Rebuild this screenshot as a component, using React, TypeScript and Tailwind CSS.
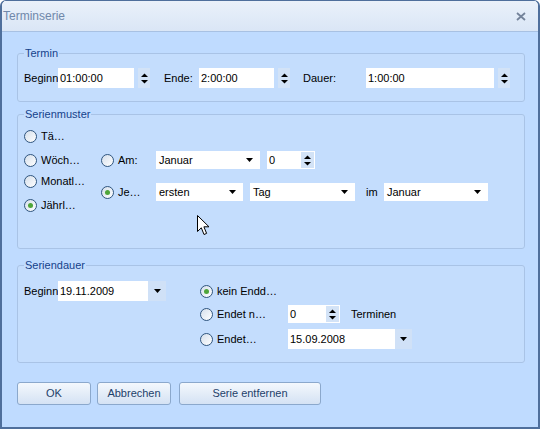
import type { ReactNode } from "react";

const FONT = "font-['Liberation_Sans',Arial,sans-serif]";

function Radio({ checked, label, w }: { checked?: boolean; label: string; w?: number }) {
  return (
    <div className="flex h-[13px] items-center" style={w ? { width: w } : undefined}>
      <div className="flex h-[13px] w-[13px] shrink-0 items-center justify-center rounded-full border border-[#30557e] bg-gradient-to-br from-[#d5dfeb] to-white">
        {checked && <div className="h-[5px] w-[5px] rounded-full bg-[#4fa53a]" />}
      </div>
      <span className="ml-[4px] whitespace-nowrap leading-[13px]">{label}</span>
    </div>
  );
}

function Arrow() {
  return (
    <svg width="7" height="4" viewBox="0 0 7 4">
      <path d="M0 0H7L3.5 4Z" fill="#000" />
    </svg>
  );
}

function SpinArrows() {
  return (
    <svg width="7" height="11" viewBox="0 0 7 11">
      <path d="M0 4H7L3.5 0.5Z" fill="#000" />
      <path d="M0 7H7L3.5 10.5Z" fill="#000" />
    </svg>
  );
}

// Spin box whose buttons sit outside the white field (Termin row)
function TimeSpin({ value, w, gap }: { value: string; w: number; gap: number }) {
  return (
    <div className="flex h-[20px] items-stretch">
      <div className="flex items-center bg-white pl-[2px]" style={{ width: w }}>
        {value}
      </div>
      <div
        className="flex w-[12px] items-center justify-center bg-[#d3e3f7]"
        style={{ marginLeft: gap }}
      >
        <SpinArrows />
      </div>
    </div>
  );
}

// Spin box with buttons inside the white field
function NumSpin({ value, w }: { value: string; w: number }) {
  return (
    <div className="flex h-[18px] items-stretch bg-white py-[1px] pr-[1px]" style={{ width: w }}>
      <div className="flex flex-1 items-center pl-[2px]">{value}</div>
      <div className="flex w-[13px] items-center justify-center bg-[#d3e3f7]">
        <SpinArrows />
      </div>
    </div>
  );
}

function Combo({ value, w }: { value: string; w: number }) {
  return (
    <div className="flex h-[18px] items-center justify-between bg-white pl-[3px] pr-[7px]" style={{ width: w }}>
      <span>{value}</span>
      <Arrow />
    </div>
  );
}

function DateBox({ value, w, btn }: { value: string; w: number; btn: number }) {
  return (
    <div className="flex h-[20px] items-stretch">
      <div className="flex items-center bg-white pl-[2px]" style={{ width: w }}>
        {value}
      </div>
      <div className="flex items-center justify-center bg-[#d0e1f7]" style={{ width: btn }}>
        <Arrow />
      </div>
    </div>
  );
}

function Group({ title, h, className, children }: { title: string; h: number; className?: string; children: ReactNode }) {
  return (
    <fieldset
      className={`w-[508px] rounded-[3px] border border-[#a9c3e6] bg-[#c4ddfd] ${className ?? ""}`}
      style={{ height: h }}
    >
      <legend className="ml-[6px] px-[1px] leading-[13px] text-[#15428b]">{title}</legend>
      {children}
    </fieldset>
  );
}

function Button({ label, w, className }: { label: string; w: number; className?: string }) {
  return (
    <button
      className={`h-[23px] rounded-[3px] border border-[#8ba8cc] bg-gradient-to-b from-[#f4f8fd] via-[#e4edf8] to-[#d4e2f4] text-[#1e3f6a] ${className ?? ""}`}
      style={{ width: w }}
    >
      {label}
    </button>
  );
}

export default function App() {
  return (
    <div
      className={`relative flex h-[429px] w-[540px] flex-col overflow-hidden rounded-t-[6px] border-2 border-t-1 border-[#4f6f9c] text-[11px] text-black ${FONT}`}
    >
      {/* title bar */}
      <div className="flex h-[31px] shrink-0 items-center justify-between border-b border-[#a8c1e3] bg-gradient-to-b from-[#eaf1fa] to-[#dae6f6] pl-[1px] pr-[12px]">
        <span className="text-[12px] text-[#7088aa]">Terminserie</span>
        <svg width="10" height="9" viewBox="0 0 10 9">
          <path d="M1 1L9 8M9 1L1 8" stroke="#74839a" strokeWidth="1.8" />
        </svg>
      </div>

      {/* body */}
      <div className="flex flex-1 flex-col bg-[#bfdbff] pl-[15px] pt-[15px]">
        <Group title="Termin" h={55}>
          <div className="flex items-center pl-[6px] pt-[8px]">
            <span className="w-[34px]">Beginn</span>
            <TimeSpin value="01:00:00" w={76} gap={4} />
            <span className="ml-[14px] w-[35px]">Ende:</span>
            <TimeSpin value="2:00:00" w={75} gap={4} />
            <span className="ml-[13px] w-[63px]">Dauer:</span>
            <TimeSpin value="1:00:00" w={128} gap={4} />
          </div>
        </Group>

        <Group title="Serienmuster" h={141} className="mt-[6px]">
          <div className="flex items-start pl-[6px] pt-[9px]">
            <div className="flex w-[77px] flex-col">
              <Radio label="Tä…" />
              <div className="mt-[11px]">
                <Radio label="Wöch…" />
              </div>
              <div className="mt-[8px]">
                <Radio label="Monatl…" />
              </div>
              <div className="mt-[11px]">
                <Radio label="Jährl…" checked />
              </div>
            </div>
            <div className="mt-[21px] flex flex-col">
              <div className="flex items-center">
                <Radio label="Am:" w={55} />
                <Combo value="Januar" w={104} />
                <div className="ml-[7px]">
                  <NumSpin value="0" w={48} />
                </div>
              </div>
              <div className="mt-[14px] flex items-center">
                <Radio label="Je…" checked w={55} />
                <Combo value="ersten" w={87} />
                <div className="ml-[7px]">
                  <Combo value="Tag" w={105} />
                </div>
                <span className="ml-[11px] w-[18px]">im</span>
                <Combo value="Januar" w={104} />
              </div>
            </div>
          </div>
        </Group>

        <Group title="Seriendauer" h={104} className="mt-[10px]">
          <div className="flex items-start pl-[6px] pt-[9px]">
            <div className="flex items-center">
              <span className="w-[34px]">Beginn</span>
              <DateBox value="19.11.2009" w={90} btn={18} />
            </div>
            <div className="ml-[34px] flex flex-col">
              <div className="flex h-[20px] items-center">
                <Radio label="kein Endd…" checked />
              </div>
              <div className="mt-[4px] flex h-[18px] items-center">
                <Radio label="Endet n…" w={88} />
                <NumSpin value="0" w={52} />
                <span className="ml-[11px]">Terminen</span>
              </div>
              <div className="mt-[6px] flex items-center">
                <Radio label="Endet…" w={88} />
                <DateBox value="15.09.2008" w={107} btn={17} />
              </div>
            </div>
          </div>
        </Group>

        <div className="mt-[19px] flex">
          <Button label="OK" w={74} />
          <Button label="Abbrechen" w={74} className="ml-[6px]" />
          <Button label="Serie entfernen" w={142} className="ml-[8px]" />
        </div>
      </div>

      {/* mouse pointer */}
      <svg className="absolute left-[195px] top-[214px]" width="13" height="21" viewBox="0 0 13 21">
        <path d="M0.5 0.5V16.5L4.3 12.8L7 19.5L9.6 18.4L6.9 11.8H12Z" fill="#fff" stroke="#000" strokeWidth="1" />
      </svg>
    </div>
  );
}
